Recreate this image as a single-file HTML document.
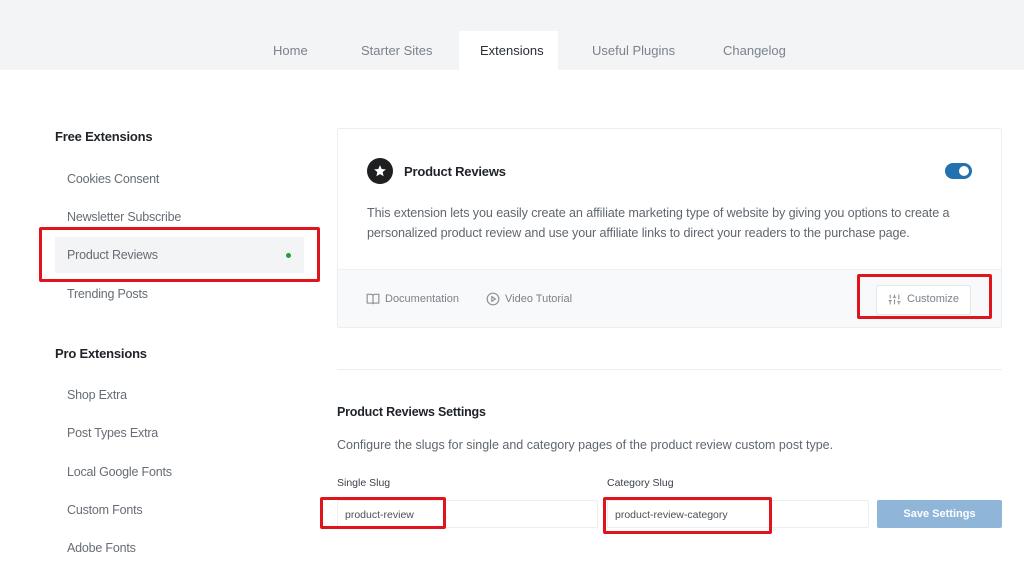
<!DOCTYPE html>
<html><head><meta charset="utf-8"><style>
*{margin:0;padding:0;box-sizing:border-box}
body{width:1024px;height:565px;background:#fff;font-family:"Liberation Sans",sans-serif;position:relative;overflow:hidden;color:#555d66}
.a{position:absolute;white-space:nowrap}
.nav{position:absolute;left:0;top:0;width:1024px;height:70px;background:#f2f4f5}
.tab{position:absolute;top:43px;font-size:13px;color:#7b828a}
.side{font-size:12.5px;color:#666d74;letter-spacing:-.2px}
.h{font-size:13px;font-weight:bold;color:#1f2328;letter-spacing:-.2px}
.red{position:absolute;border:3px solid #e0151c;border-radius:2px}
</style></head><body>
<div class="nav"></div>
<div class="a" style="left:459px;top:31px;width:99px;height:39px;background:#fff"></div>
<div class="tab a" style="left:273px">Home</div>
<div class="tab a" style="left:361px">Starter Sites</div>
<div class="tab a" style="left:480px;color:#2a2f35">Extensions</div>
<div class="tab a" style="left:592px">Useful Plugins</div>
<div class="tab a" style="left:723px">Changelog</div>

<div class="a h" style="left:55px;top:129px">Free Extensions</div>
<div class="a side" style="left:67px;top:172px">Cookies Consent</div>
<div class="a side" style="left:67px;top:210px">Newsletter Subscribe</div>
<div class="a" style="left:55px;top:237px;width:249px;height:36px;background:#f2f4f5"></div>
<div class="a side" style="left:67px;top:248px">Product Reviews</div>
<div class="a" style="left:286px;top:253px;width:5px;height:5px;border-radius:50%;background:#1aa33a"></div>
<div class="red" style="left:39px;top:227px;width:281px;height:55px"></div>
<div class="a side" style="left:67px;top:287px">Trending Posts</div>
<div class="a h" style="left:55px;top:346px">Pro Extensions</div>
<div class="a side" style="left:67px;top:388px">Shop Extra</div>
<div class="a side" style="left:67px;top:426px">Post Types Extra</div>
<div class="a side" style="left:67px;top:465px">Local Google Fonts</div>
<div class="a side" style="left:67px;top:503px">Custom Fonts</div>
<div class="a side" style="left:67px;top:541px">Adobe Fonts</div>

<div class="a" style="left:337px;top:128px;width:665px;height:200px;border:1px solid #eceef0;border-radius:2px;background:#fff"></div>
<div class="a" style="left:338px;top:269px;width:663px;height:58px;background:#f8f9fa;border-top:1px solid #eef0f2"></div>
<div class="a" style="left:367px;top:158px;width:26px;height:26px;border-radius:50%;background:#1d1f21"></div>
<svg class="a" style="left:373px;top:164px" width="14" height="14" viewBox="0 0 24 24"><path d="M12 2l2.9 6.6 7.1.6-5.4 4.7 1.6 7L12 17.3 5.8 20.9l1.6-7L2 9.2l7.1-.6z" fill="#fff"/></svg>
<div class="a h" style="left:404px;top:164px">Product Reviews</div>
<div class="a" style="left:945px;top:163px;width:27px;height:16px;border-radius:8px;background:#2271b1"></div>
<div class="a" style="left:959px;top:166px;width:10px;height:10px;border-radius:50%;background:#fff"></div>
<div class="a" style="left:367px;top:203px;font-size:12.6px;line-height:20px;color:#5f666d;letter-spacing:-.1px">This extension lets you easily create an affiliate marketing type of website by giving you options to create a<br>personalized product review and use your affiliate links to direct your readers to the purchase page.</div>
<svg class="a" style="left:366px;top:292px" width="14" height="14" viewBox="0 0 24 24" fill="none" stroke="#8b9198" stroke-width="2"><path d="M2 4h7a3 3 0 013 3v14a2 2 0 00-2-2H2zM22 4h-7a3 3 0 00-3 3v14a2 2 0 012-2h8z"/></svg>
<div class="a" style="left:385px;top:293px;font-size:11px;color:#7b828a">Documentation</div>
<svg class="a" style="left:486px;top:292px" width="14" height="14" viewBox="0 0 24 24" fill="none" stroke="#8b9198" stroke-width="2"><circle cx="12" cy="12" r="10"/><path d="M10 8l6 4-6 4z"/></svg>
<div class="a" style="left:505px;top:293px;font-size:11px;color:#7b828a">Video Tutorial</div>
<div class="a" style="left:876px;top:285px;width:95px;height:30px;border:1px solid #e5e7ea;background:#fff;border-radius:2px"></div>
<svg class="a" style="left:888px;top:293px" width="13" height="13" viewBox="0 0 24 24" fill="none" stroke="#8b9198" stroke-width="2"><path d="M4 21v-7M4 10V3M12 21v-9M12 8V3M20 21v-5M20 12V3M1 14h6M9 8h6M17 16h6"/></svg>
<div class="a" style="left:907px;top:293px;font-size:11px;color:#7b828a">Customize</div>
<div class="red" style="left:857px;top:274px;width:135px;height:45px"></div>

<div class="a" style="left:337px;top:369px;width:665px;height:1px;background:#eceef0"></div>
<div class="a h" style="left:337px;top:405px;font-weight:bold;font-size:12.5px">Product Reviews Settings</div>
<div class="a" style="left:337px;top:438px;font-size:12.5px;color:#5f666d">Configure the slugs for single and category pages of the product review custom post type.</div>
<div class="a" style="left:337px;top:477px;font-size:10.5px;color:#3c4248">Single Slug</div>
<div class="a" style="left:607px;top:477px;font-size:10.5px;color:#3c4248">Category Slug</div>
<div class="a" style="left:337px;top:500px;width:261px;height:28px;border:1px solid #eceef0;border-radius:2px"></div>
<div class="a" style="left:607px;top:500px;width:262px;height:28px;border:1px solid #eceef0;border-radius:2px"></div>
<div class="a" style="left:345px;top:509px;font-size:10.5px;color:#4a5056">product-review</div>
<div class="a" style="left:615px;top:509px;font-size:10.5px;color:#4a5056">product-review-category</div>
<div class="red" style="left:320px;top:497px;width:126px;height:32px"></div>
<div class="red" style="left:603px;top:497px;width:169px;height:37px"></div>
<div class="a" style="left:877px;top:500px;width:125px;height:28px;background:#8fb5d8;border-radius:2px;color:#fff;font-size:11px;font-weight:bold;text-align:center;line-height:28px">Save Settings</div>
</body></html>
